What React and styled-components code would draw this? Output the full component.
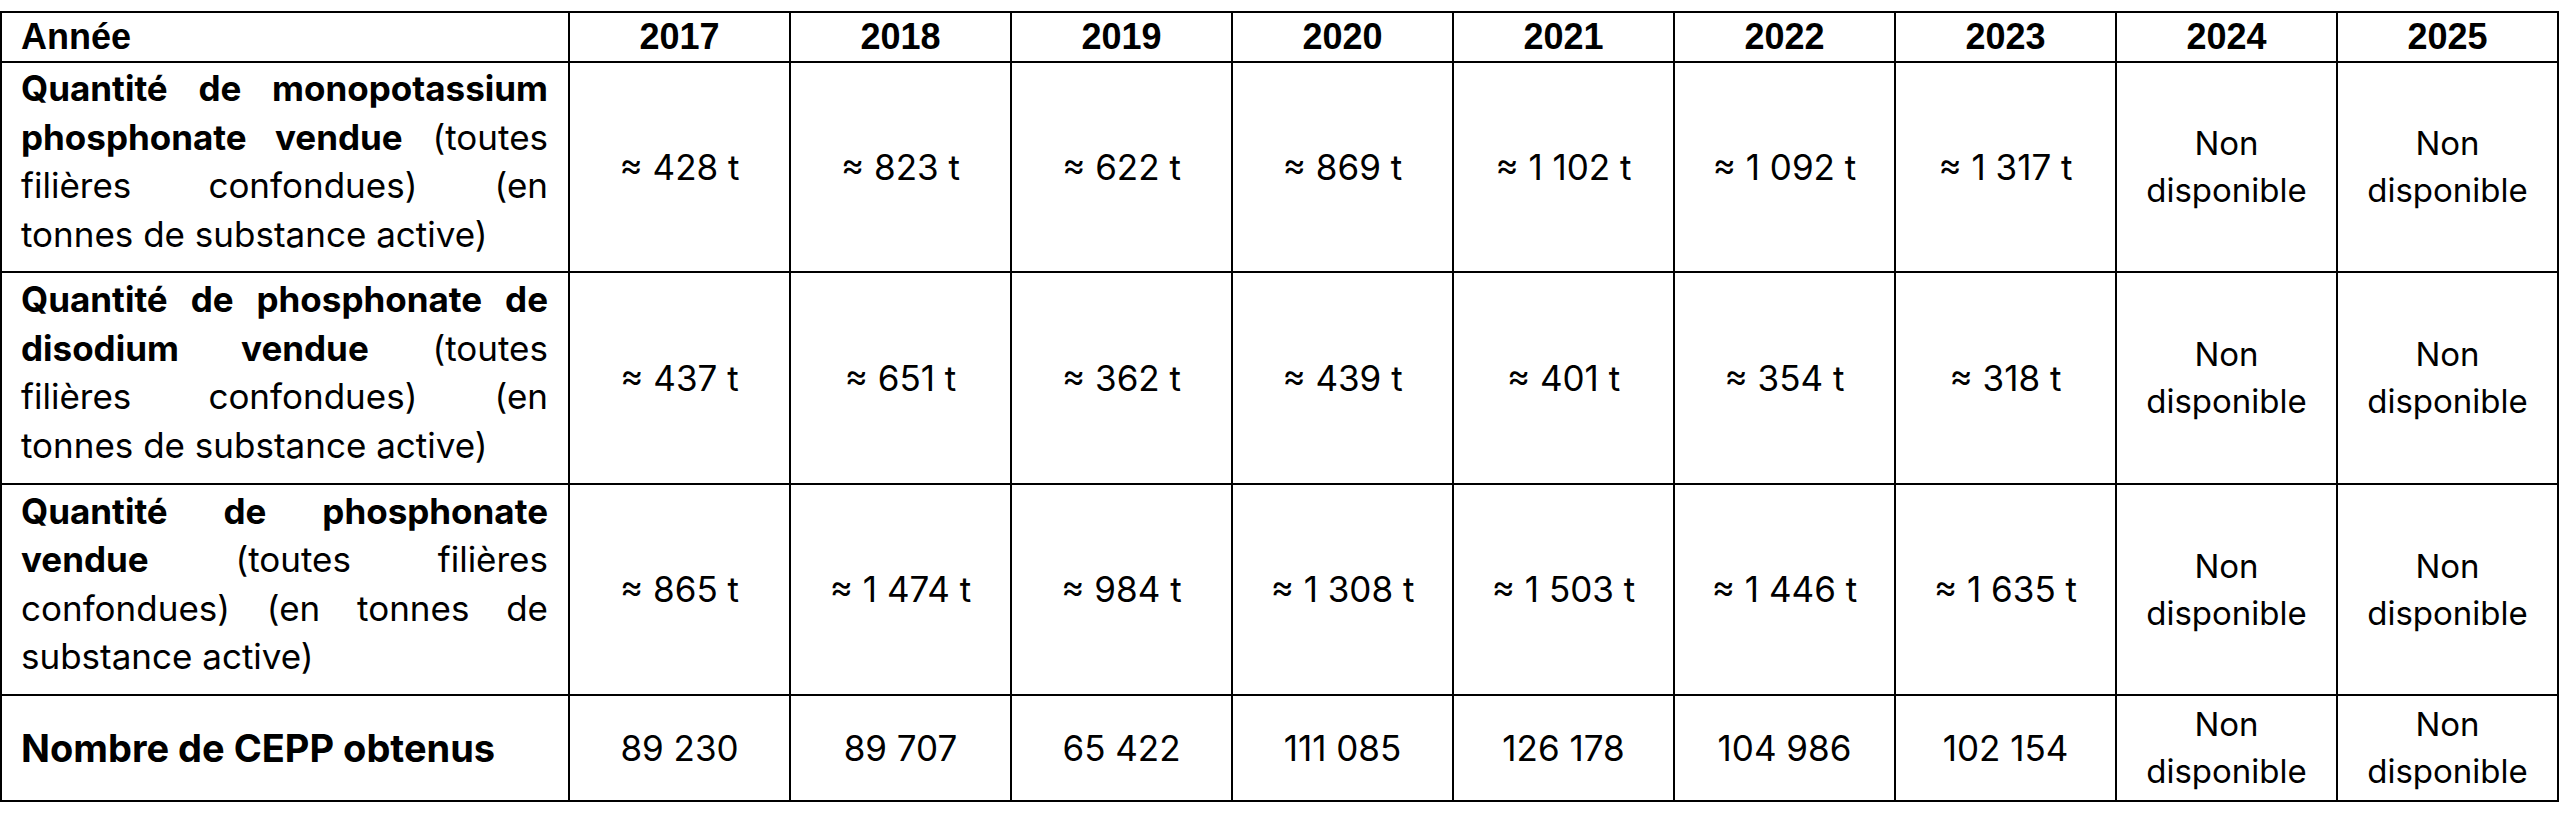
import React from "react";
import styled, { createGlobalStyle } from "styled-components";

const GlobalStyle = createGlobalStyle`
  html, body {
    margin: 0;
    padding: 0;
    background: #ffffff;
  }
`;

// page around the table
const Page = styled.div`
  padding-top: 11px;
  background: #ffffff;
`;

const Table = styled.table`
  border-collapse: collapse;
  table-layout: fixed;
  width: 2558px;
  color: #000;
`;

const Col = styled.col`
  width: ${(p) => p.$w}px;
`;

const Row = styled.tr`
  height: ${(p) => p.$h}px;
`;

// header row cells (Année / years)
const HeadCell = styled.th`
  border: 2px solid #000;
  padding: 0 19px;
  font-family: "Liberation Sans", Arial, sans-serif;
  font-weight: 700;
  font-size: 36px;
  line-height: 44px;
  text-align: ${(p) => (p.$left ? "left" : "center")};
  vertical-align: middle;
`;

// first column labels
const LabelCell = styled.td`
  border: 2px solid #000;
  padding: 0 20px ${(p) => (p.$single ? "0" : "12px")} 19px;
  font-family: Inter, "Liberation Sans", sans-serif;
  font-size: ${(p) => (p.$single ? "38px" : "35px")};
  line-height: 48.5px;
  vertical-align: middle;
`;

const Line = styled.span`
  display: block;
  text-align: ${(p) => (p.$last ? "left" : "justify")};
  text-align-last: ${(p) => (p.$last ? "left" : "justify")};
`;

const Strong = styled.b`
  font-weight: 700;
`;

// data cells
const ValueCell = styled.td`
  border: 2px solid #000;
  padding: 0 4px;
  font-family: Inter, "Liberation Sans", sans-serif;
  font-size: ${(p) => (p.$small ? "33px" : "35px")};
  line-height: 47px;
  text-align: center;
  vertical-align: middle;
`;

const years = ["2017", "2018", "2019", "2020", "2021", "2022", "2023", "2024", "2025"];

const rows = [
  {
    h: 210,
    lines: [
      [<Strong key="a">Quantité de monopotassium</Strong>],
      [<Strong key="a">phosphonate vendue</Strong>, " (toutes"],
      ["filières confondues) (en"],
      ["tonnes de substance active)"],
    ],
    values: ["≈ 428 t", "≈ 823 t", "≈ 622 t", "≈ 869 t", "≈ 1 102 t", "≈ 1 092 t", "≈ 1 317 t"],
  },
  {
    h: 212,
    lines: [
      [<Strong key="a">Quantité de phosphonate de</Strong>],
      [<Strong key="a">disodium vendue</Strong>, " (toutes"],
      ["filières confondues) (en"],
      ["tonnes de substance active)"],
    ],
    values: ["≈ 437 t", "≈ 651 t", "≈ 362 t", "≈ 439 t", "≈ 401 t", "≈ 354 t", "≈ 318 t"],
  },
  {
    h: 211,
    lines: [
      [<Strong key="a">Quantité de phosphonate</Strong>],
      [<Strong key="a">vendue</Strong>, " (toutes filières"],
      ["confondues) (en tonnes de"],
      ["substance active)"],
    ],
    values: ["≈ 865 t", "≈ 1 474 t", "≈ 984 t", "≈ 1 308 t", "≈ 1 503 t", "≈ 1 446 t", "≈ 1 635 t"],
  },
  {
    h: 106,
    single: true,
    lines: [[<Strong key="a">Nombre de CEPP obtenus</Strong>]],
    values: ["89 230", "89 707", "65 422", "111 085", "126 178", "104 986", "102 154"],
  },
];

function NotAvailable() {
  return (
    <ValueCell $small>
      Non
      <br />
      disponible
    </ValueCell>
  );
}

export default function App() {
  return (
    <Page>
      <GlobalStyle />
      <Table>
        <colgroup>
          <Col $w={568} />
          {years.map((y) => (
            <Col key={y} $w={221} />
          ))}
        </colgroup>
        <tbody>
          <Row $h={50}>
            <HeadCell $left>Année</HeadCell>
            {years.map((y) => (
              <HeadCell key={y}>{y}</HeadCell>
            ))}
          </Row>
          {rows.map((r, i) => (
            <Row key={i} $h={r.h}>
              <LabelCell $single={r.single}>
                {r.lines.map((parts, j) => (
                  <Line key={j} $last={j === r.lines.length - 1}>
                    {parts}
                  </Line>
                ))}
              </LabelCell>
              {r.values.map((v, j) => (
                <ValueCell key={j}>{v}</ValueCell>
              ))}
              <NotAvailable />
              <NotAvailable />
            </Row>
          ))}
        </tbody>
      </Table>
    </Page>
  );
}
